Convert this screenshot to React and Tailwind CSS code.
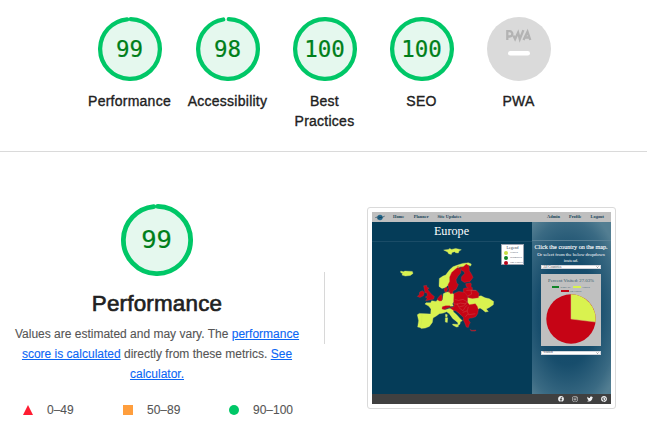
import React from "react";
import { FaFacebook, FaInstagram, FaTwitter, FaPinterest } from "react-icons/fa";

function Ring({ score, className }) {
  const circumference = 2 * Math.PI * 56;
  const length = score === 100 ? circumference : (score / 100) * circumference - 4;
  return (
    <svg viewBox="0 0 120 120" className={className}>
      <circle cx="60" cy="60" r="56" fill="#e5f8ee" />
      <circle
        cx="60"
        cy="60"
        r="56"
        fill="none"
        stroke="#00c767"
        strokeWidth="8"
        strokeLinecap="round"
        strokeDasharray={`${length} ${circumference}`}
        transform="rotate(-88.5 60 60)"
      />
    </svg>
  );
}

function Score({ value, large }) {
  return (
    <div className={`grid place-items-center ${large ? "h-[72px] w-[72px]" : "h-16 w-16"}`}>
      <Ring score={value} className="col-start-1 row-start-1 h-full w-full" />
      <span
        className={`z-10 col-start-1 row-start-1 mr-px font-['DejaVu_Sans_Mono',monospace] leading-none text-[#007f1a] [-webkit-text-stroke:0.2px_#007f1a] ${
          large ? "text-[25.5px]" : "text-[22.5px]"
        }`}
      >
        {value}
      </span>
    </div>
  );
}

function PwaBadge() {
  return (
    <svg viewBox="0 0 64 64" className="h-16 w-16">
      <circle cx="32" cy="32" r="32" fill="#dadada" />
      <g fill="none" stroke="#b3b3b3" strokeWidth="2.3">
        <path d="M20.3 23V13M20.3 14.2h2.4a2.2 2.2 0 0 1 0 5.3h-2.4" />
        <path d="M26.3 18.5l1.8 3.6 3-6.5 1.7 6.5 3.6-9" />
        <path d="M36.5 23l4-8.2 2.8 8.2M38.5 20.5h4" />
      </g>
      <rect x="21" y="34" width="22" height="4.6" rx="2.3" fill="#fff" />
    </svg>
  );
}

const categories = [
  { label: "Performance", score: 99 },
  { label: "Accessibility", score: 98 },
  { label: "Best Practices", score: 100 },
  { label: "SEO", score: 100 },
  { label: "PWA", score: null },
];

function Globe() {
  return (
    <svg viewBox="0 0 30 20" className="h-[7px] w-[10px]">
      <circle cx="15" cy="10" r="8" fill="#24698e" />
      <path d="M1 10l10-2 8 3 10-5M7 14l14-6" fill="none" stroke="#103f59" strokeWidth="2" />
    </svg>
  );
}

function EuropeMap() {
  return (
    <svg viewBox="-84 3 480 459" className="col-start-1 row-start-1 h-full w-full">
      <g transform="translate(0 1.5)">
        <g fill="#d9f24f" stroke="#e0ee80" strokeWidth="1" strokeLinejoin="round">
          <path d="M131 28l14-2 4-3 6 3 12-3 17 4-7 4-2 6-8-1-3-3-8 2-2 6-8-2-3-5z" />
          <path d="M2 91l8 2 5-2 22 1 2 6-8 6-15 2-10-3 2-4-6-4z" />
          <path d="M118 113l11-7 8-3 12-16 10-9 14-5 15-5 17-2 9 4-2 6-9-3-10 5-12 0-10 5-9 9-8 14-1 15-3 11-7 2-6 6-11 3-9-6z" />
          <path d="M130 159L137 155L150 152L161 160L164 180L157 189L160 196L130 198L126 204L136 207L148 203L160 205L160 213L170 222L180 233L187 240L181 243L180 250L175 254L173 245L158 233L148 219L140 213L130 217L118 219L110 225L99 232L97 245L88 257L76 262L64 263L60 260L53 259L56 240L52 222L58 218L78 219L92 220L93 205L86 196L75 190L78 186L92 186L95 180L108 182L115 175L124 180L128 177Z" />
          <path d="M137 220l5 2-1 7-5-2zM136 231l7 0-1 14-6-1z" />
          <path d="M158 250l16 1 1 7-6 1-11-6z" />
          <path d="M202 171l29-3 12-3 12 6 13 3 13 8-1 10-12 8-9 5 6 7-9 2-9-8-7-4-8 4-1 7-5-10-8-6-20-1 5-9z" />
          <path d="M171 208l14 3 6 12-7-1-11-9z" />
        </g>
        <g fill="#c60415" stroke="#cc3a42" strokeWidth="1" strokeLinejoin="round">
          <path d="M144 132l5-10 0-13 6-14 10-9 8-6 10 7-1 10-8 9-6 11 2 10 5 4-3 7-4 8-9 4-1 8-7 1-5-15z" />
          <path d="M172 77l8 3 10-2 9-8 8 6 1 14 7 11 4 9-9 12-17 3-9-6 0-10 10-11-2-6-7-3-4-8z" />
          <path d="M197 129l14-3 3 4-1 7 4 4 0 7 12 1 8 9-2 13-18 2-11-2-7-9-9-4 0-14 9-3 6 1-6-5z" />
          <path d="M132 145l7-6 4 4-2 9-6 2z M145 150l5 1-1 4-4-1z" />
          <path d="M71 135l9-1 1 6 6 2-4 5 7 8 6 7 7 5-2 8-9 2-15 3 5-7-6-4 6-4-1-8-6-2-2-9z" />
          <path d="M59 154l8-4 6 5-3 10-10 5-8-3 6-6z" />
          <path d="M113 173l6-8 5-4 3 8-2 11-6 1-7-4z" />
          <path d="M127 198l10-3 12 0 4 4-12 3-7 4-8-1z" />
          <path d="M162 158l14-6 19 3 8 12-1 17 6 8 18-3 6 8 3 10-2 12-6 9-12 4-6 0-4 5 6 9-3 4-3 10-6-1-5-13-4-8 1-7-7-7-9-8-8-6-6-1-9-6 4-4 6-1-1-18z" />
          <path d="M210 266l6 3 12-1-2 3-12 0z" />
        </g>
        <g fill="none" stroke="#cf6a60" strokeWidth="1">
          <path d="M164 176l12 3 13-3 14 8-8 5-14-2-10 4-12-3M171 187l5 12 15-4 8-7M177 201l12 9 8-13 5-3M188 215l14-5 3-12M201 210l5 12 20-3M204 219l-8 9M203 166l12-6-2-11 15 0M199 149l18-1" />
          <path d="M66 221l-1 20-3 17" stroke="#c4df55" />
        </g>
      </g>
      <path d="M-84 3H396" stroke="#315d77" strokeWidth="2" />
    </svg>
  );
}

function Dropdown({ text }) {
  return (
    <div className="flex h-[4.4px] w-[60px] items-center justify-between border-[0.4px] border-gray-300 bg-white px-[1px] text-[3.4px] leading-none text-gray-700">
      <span>{text}</span>
      <svg viewBox="0 0 6 4" className="h-[2px] w-[3px]">
        <path d="M1 1l2 2 2-2" fill="none" stroke="#333" />
      </svg>
    </div>
  );
}

function LegendRow({ color, text }) {
  return (
    <div className="flex w-full items-center gap-[2px] whitespace-nowrap pl-[2px] leading-[4px]">
      <i className={`h-[4px] w-[4px] shrink-0 rounded-full ${color}`} />
      {text}
    </div>
  );
}

function SitePreview() {
  return (
    <div className="flex h-48 w-[239px] flex-col overflow-hidden bg-[#053c58] font-['Liberation_Serif',serif] leading-none">
      <div className="flex h-[10px] shrink-0 items-center bg-[#bfbfbf] pl-[3px] pr-[7px] text-[4.4px] font-bold text-[#174358]">
        <Globe />
        <span className="ml-[8px]">Home</span>
        <span className="ml-[9.5px]">Planner</span>
        <span className="ml-[9px]">Site Updates</span>
        <span className="ml-auto">Admin</span>
        <span className="ml-[9px]">Profile</span>
        <span className="ml-[9px]">Logout</span>
      </div>
      <div className="flex h-[172px] shrink-0">
        <div className="flex w-[160px] flex-col">
          <div className="flex h-[18.5px] items-center justify-center pr-px text-[12.2px] text-white">Europe</div>
          <div className="grid h-[153.5px]">
            <EuropeMap />
            <div className="z-10 col-start-1 row-start-1 mr-[8px] mt-[3px] flex h-[21px] w-[23px] flex-col items-center gap-[1px] justify-self-end border-[0.5px] border-gray-400 bg-white pt-px text-[2.8px] text-gray-700">
              <span className="text-[4px] leading-[4px]">Legend</span>
              <LegendRow color="bg-[#c6dd42]" text="Visited" />
              <LegendRow color="bg-[#128428]" text="Wishlisted" />
              <LegendRow color="bg-[#b9041b]" text="Not Visited" />
            </div>
          </div>
        </div>
        <div className="flex w-[79px] flex-col items-center bg-[radial-gradient(ellipse_75%_62%_at_45%_52%,#0f4667_0%,#174d6c_50%,#3a6a83_85%,#537e92_100%)] pr-px text-white">
          <div className="-mr-px mb-[3px] h-[18.5px] self-stretch border-b-[0.5px] border-[#5a8297]" />
          <div className="whitespace-nowrap text-[6.15px] leading-[7px] [-webkit-text-stroke:0.1px_white]">
            Click the country on the map.
          </div>
          <div className="mt-[1.5px] whitespace-nowrap text-center text-[4.75px] leading-[5.8px]">
            Or select from the below dropdown
            <br />
            instead.
          </div>
          <div className="mt-[1.5px]">
            <Dropdown text="All Countries" />
          </div>
          <div className="mt-[5px] flex h-[72px] w-[60px] flex-col items-center bg-[#c0c0c0] pt-[3.5px] text-[#32586a]">
            <span className="whitespace-nowrap text-[4.75px] leading-[5px]">Percent Visited: 27.03%</span>
            <div className="mt-[3px] flex items-center gap-[1px] text-[2.6px] leading-[3px]">
              <i className="h-[2px] w-[7px] bg-[#128428]" />
              Wish List
              <i className="ml-[2px] h-[2px] w-[8px] bg-[#d9f24f]" />
              Visited
            </div>
            <div className="mt-[1px] flex items-center gap-[1px] text-[2.6px] leading-[3px]">
              <i className="h-[2px] w-[8px] bg-[#c60415]" />
              Not Visited
            </div>
            <svg viewBox="0 0 50 50" className="mt-[1.5px] h-[50px] w-[50px]">
              <circle cx="25" cy="25" r="24.7" fill="#c60415" />
              <path d="M25 25V.3A24.7 24.7 0 0 1 49.5 28z" fill="#d9f24f" />
              <path d="M25 .3V25L49.5 28" fill="none" stroke="#d3bd78" strokeWidth="0.5" />
            </svg>
          </div>
          <div className="mt-[4.5px]">
            <Dropdown text="Visited" />
          </div>
        </div>
      </div>
      <div className="flex h-[10px] shrink-0 items-center justify-end gap-[8.3px] bg-[#404040] pr-[4px] text-[6px] text-gray-100">
        <FaFacebook />
        <FaInstagram />
        <FaTwitter />
        <FaPinterest />
      </div>
    </div>
  );
}

export default function App() {
  return (
    <div className="h-[434px] w-[647px] overflow-hidden bg-white font-['Liberation_Sans',Arial,sans-serif] text-[#212121]">
      <header className="flex h-[152px] border-b border-[#dadada] pl-[81.5px] pt-[17px]">
        {categories.map(({ label, score }) => (
          <div key={label} className="flex w-[97px] flex-col items-center first:mr-px">
            {score === null ? <PwaBadge /> : <Score value={score} />}
            <div className="mt-[10px] max-w-[86px] pr-px text-center text-[14px] leading-5 tracking-[0.25px] [-webkit-text-stroke:0.35px_#212121]">
              {label}
            </div>
          </div>
        ))}
      </header>
      <main className="flex">
        <section className="flex w-[324px] flex-col items-center pr-[10px] pt-[52px]">
          <Score value={99} large />
          <h1 className="mt-3 text-[22.4px] leading-8 tracking-[0.2px] [-webkit-text-stroke:0.65px_#212121]">
            Performance
          </h1>
          <p className="mt-1 whitespace-nowrap text-center text-[12px] leading-5 text-[#555] [-webkit-text-stroke:0.1px]">
            Values are estimated and may vary. The <a className="text-[#0b66f5] underline">performance</a>
            <br />
            <a className="text-[#0b66f5] underline">score is calculated</a> directly from these metrics.{" "}
            <a className="text-[#0b66f5] underline">See</a>
            <br />
            <a className="text-[#0b66f5] underline">calculator.</a>
          </p>
          <div className="mt-4 flex w-full pl-[23px] text-[12px] leading-5 text-[#555] [-webkit-text-stroke:0.1px]">
            <div className="flex w-[100px] items-center gap-[14px]">
              <svg viewBox="0 0 10 10" className="h-[10px] w-[10px]">
                <path d="M5 0l5 10H0z" fill="#ff1d32" />
              </svg>
              0–49
            </div>
            <div className="flex w-[106px] items-center gap-[14px]">
              <i className="h-[10px] w-[10px] bg-[#ff9e3d]" />
              50–89
            </div>
            <div className="flex items-center gap-[14px]">
              <i className="h-[10px] w-[10px] rounded-full bg-[#00c767]" />
              90–100
            </div>
          </div>
        </section>
        <div className="mt-[120px] h-[72px] w-px bg-[#d8d8d8]" />
        <section className="pl-[42px] pt-[55px]">
          <div className="h-[202px] w-[249px] rounded-[3px] border border-[#dadada] p-1">
            <SitePreview />
          </div>
        </section>
      </main>
    </div>
  );
}
